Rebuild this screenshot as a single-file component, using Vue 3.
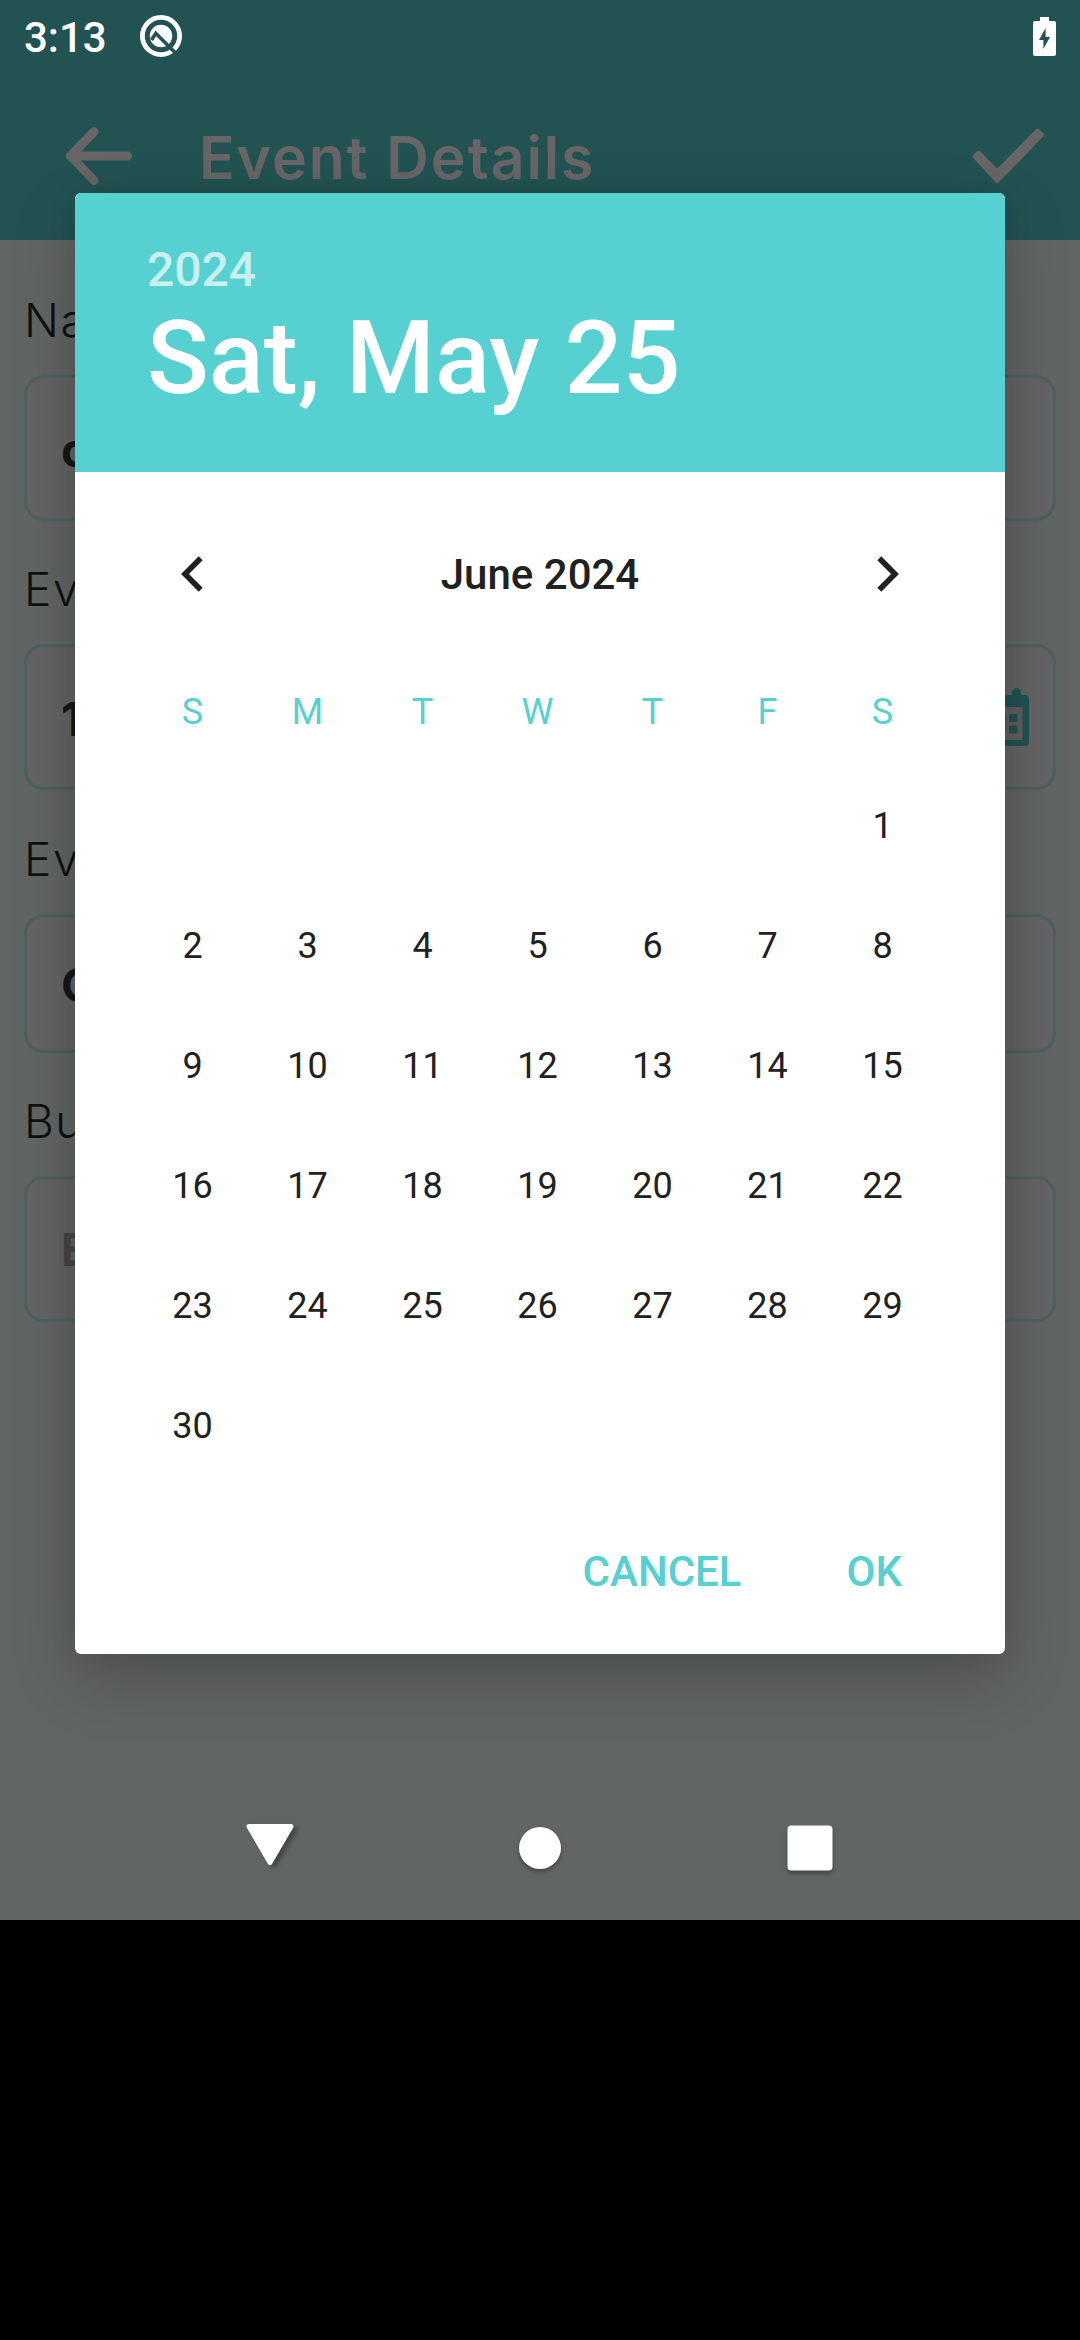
<script setup>
const fields = [
  { label: 'Name', value: 'c', size: 'tall' },
  { label: 'Event', value: '1', size: 'tall', icon: true },
  { label: 'Event', value: 'O', size: 'short' },
  { label: 'Bud', value: 'E', size: 'tall', hint: true },
]
const weekdays = ['S', 'M', 'T', 'W', 'T', 'F', 'S']
const firstWeekday = 6
const days = Array.from({ length: 42 }, (_, i) => {
  const d = i - firstWeekday + 1
  return d >= 1 && d <= 30 ? d : ''
})
</script>

<template>
  <div class="device">
    <div class="screen">
      <header class="appbar">
        <div class="status">
          <span class="clock">3:13</span>
          <svg class="q" width="44" height="44" viewBox="0 0 44 44">
            <circle cx="22" cy="22" r="18.6" fill="none" stroke="#fff" stroke-width="4.8" />
            <circle cx="22" cy="22" r="11.2" fill="#fff" />
            <path d="M12.5 26 L16.8 19.3 L37 39.5" fill="none" stroke="#225352" stroke-width="3.6" />
          </svg>
          <svg class="battery" width="23" height="39" viewBox="0 0 23 39">
            <path d="M7 0h9v4h5a2 2 0 0 1 2 2v31a2 2 0 0 1-2 2H2a2 2 0 0 1-2-2V6a2 2 0 0 1 2-2h5z" fill="#fff" />
            <path d="M12.6 11 L6 23h4.4v9L17 20h-4.4z" fill="#225352" />
          </svg>
        </div>
        <div class="toolbar">
          <svg class="back" width="68" height="60" viewBox="0 0 68 60">
            <path d="M62.500 30H5.500M29 5.700L5.500 30L29 54.500" fill="none" stroke="#676565" stroke-width="9" stroke-linecap="round" stroke-linejoin="round" />
          </svg>
          <h1 class="title">Event Details</h1>
          <svg class="check" width="74" height="58" viewBox="0 0 74 58">
            <path d="M3.500 29.500L7.500 25.500L26.300 44.300L66.500 3.500L71 7.800L26.300 54.200Z" fill="#676565" stroke="#676565" stroke-width="4" stroke-linejoin="round" />
          </svg>
        </div>
      </header>

      <main class="form">
        <div v-for="(f, i) in fields" :key="i" class="field">
          <div class="label">{{ f.label }}</div>
          <div class="box" :class="f.size">
            <span class="value" :class="{ hint: f.hint }">{{ f.value }}</span>
            <svg v-if="f.icon" class="calendar" width="54" height="58" viewBox="0 0 54 58">
              <path d="M8 7V4.500a4.500 4.500 0 0 1 9 0V7H37V4.500a4.500 4.500 0 0 1 9 0V7h4a4 4 0 0 1 4 4v43a4 4 0 0 1-4 4H4a4 4 0 0 1-4-4V11a4 4 0 0 1 4-4z" fill="#205352" />
              <path d="M6.500 19H47.500V52H6.500z" fill="#605f5f" />
              <path d="M10 26h8.500v8H10zM22 26h8.500v8H22zM34 26h8.500v8H34zM10 37.500h8.500v8H10zM22 37.500h8.500v8H22zM34 37.500h8.500v8H34z" fill="#205352" />
            </svg>
          </div>
        </div>
      </main>

      <nav class="navbar">
        <svg width="60" height="60" viewBox="0 0 60 60">
          <path class="tri" d="M9 8.500H51L30 44.500Z" />
        </svg>
        <svg width="60" height="60" viewBox="0 0 60 60">
          <circle class="dot" cx="30" cy="30" r="21" />
        </svg>
        <svg width="60" height="60" viewBox="0 0 60 60">
          <rect class="dot" x="7.500" y="7.500" width="45" height="45" rx="4" />
        </svg>
      </nav>

      <div class="overlay">
        <section class="dialog">
          <div class="head">
            <div class="year">2024</div>
            <div class="date">Sat, May 25</div>
          </div>
          <div class="monthbar">
            <svg width="22" height="36" viewBox="0 0 22 36">
              <path d="M19.700 2.200L4 18L19.700 33.800" fill="none" stroke="#212121" stroke-width="5.600" />
            </svg>
            <span class="month">June 2024</span>
            <svg width="22" height="36" viewBox="0 0 22 36">
              <path d="M2.300 2.200L18 18L2.300 33.800" fill="none" stroke="#212121" stroke-width="5.600" />
            </svg>
          </div>
          <div class="grid weekdays">
            <span v-for="(w, i) in weekdays" :key="i">{{ w }}</span>
          </div>
          <div class="grid days">
            <span v-for="(d, i) in days" :key="i">{{ d }}</span>
          </div>
          <div class="actions">
            <span>CANCEL</span>
            <span>OK</span>
          </div>
        </section>
      </div>
    </div>
  </div>
</template>

<style>
body {
  background: #000;
}
</style>

<style scoped>
.device {
  width: 1080px;
  height: 2340px;
  background: #000;
  font-family: Roboto, sans-serif;
  overflow: hidden;
}
.screen {
  position: relative;
  display: flex;
  flex-direction: column;
  width: 1080px;
  height: 1920px;
  background: #616564;
  overflow: hidden;
}
svg {
  display: block;
  flex: none;
}
.appbar {
  height: 240px;
  background: #225352;
}
.status {
  display: flex;
  align-items: center;
  height: 72px;
  padding: 0 24px;
  color: #fff;
}
.clock {
  width: 115px;
  padding-top: 4px;
  font-size: 42px;
  font-weight: 500;
  line-height: 50px;
}
.battery {
  margin-left: auto;
}
.toolbar {
  display: flex;
  align-items: center;
  height: 168px;
  padding: 0 35px 0 65px;
}
.title {
  flex: 1;
  margin: 3px 0 0 66px;
  color: #676565;
  font-family: Inter, sans-serif;
  font-size: 59px;
  font-weight: 600;
  line-height: 70px;
  letter-spacing: 1.9px;
  white-space: nowrap;
}
.form {
  display: flex;
  flex: 1;
  flex-direction: column;
  gap: 38.3px;
  padding: 50px 24px 0;
  font-family: Inter, sans-serif;
}
.label {
  height: 60px;
  margin-bottom: 25px;
  color: #0f1111;
  font-size: 46px;
  font-weight: 350;
  line-height: 60px;
  letter-spacing: 1.5px;
}
.box {
  display: flex;
  align-items: center;
  justify-content: space-between;
  box-sizing: border-box;
  height: 146px;
  padding: 2px 24px 0 34px;
  border: 3px solid #4c6161;
  border-radius: 20px;
  background: #656464;
}
.box.short {
  height: 139px;
}
.calendar {
  margin-top: -3px;
}
.value {
  color: #171717;
  font-size: 47px;
  font-weight: 700;
}
.value.hint {
  color: #454545;
  font-size: 45px;
}
.navbar {
  display: flex;
  align-items: center;
  justify-content: center;
  gap: 210px;
  height: 144px;
}
.tri {
  fill: #fff;
  stroke: #fff;
  stroke-width: 5px;
  stroke-linejoin: round;
  filter: drop-shadow(4px 3px 2px rgba(0, 0, 0, 0.3));
}
.dot {
  fill: #fff;
  filter: drop-shadow(0 3px 2px rgba(0, 0, 0, 0.3));
}
.overlay {
  position: absolute;
  inset: 0;
  padding: 193px 75px 0;
}
.dialog {
  height: 1461px;
  border-radius: 6px;
  background: #fff;
  box-shadow: 0 0 30px rgba(0, 0, 0, 0.08), 0 24px 66px rgba(0, 0, 0, 0.2);
  overflow: hidden;
}
.head {
  box-sizing: border-box;
  height: 279px;
  padding: 49px 72px 0;
  background: #56d0d0;
  color: #fff;
  font-weight: 500;
}
.year {
  color: #c8f0f0;
  font-size: 48px;
  line-height: 56px;
}
.date {
  font-size: 102px;
  line-height: 120px;
  white-space: nowrap;
}
.monthbar {
  display: flex;
  align-items: center;
  justify-content: space-between;
  height: 204px;
  padding: 0 106px;
}
.month {
  color: #212121;
  font-size: 42px;
  font-weight: 500;
}
.grid {
  display: grid;
  grid-template-columns: repeat(7, 115px);
  margin-left: 60px;
  font-size: 36px;
  text-align: center;
}
.weekdays {
  color: #56d0d0;
  line-height: 72px;
}
.days {
  grid-auto-rows: 120px;
  margin-top: 18px;
  color: #212121;
  line-height: 120px;
}
.actions {
  display: flex;
  align-items: center;
  justify-content: flex-end;
  gap: 105px;
  height: 168px;
  padding: 2px 103px 0 0;
  box-sizing: border-box;
  color: #56d0d0;
  font-size: 42px;
  font-weight: 500;
}
</style>
